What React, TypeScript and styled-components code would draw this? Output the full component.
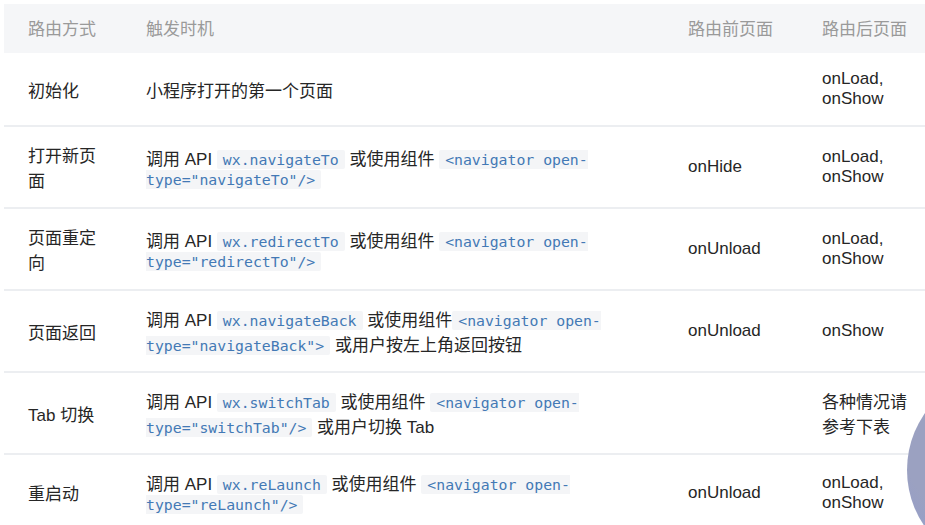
import styled, { createGlobalStyle } from 'styled-components';

const GlobalStyle = createGlobalStyle`
  html, body {
    margin: 0;
    padding: 0;
    background: #ffffff;
    overflow: hidden;
  }
  body {
    font-family: 'Liberation Sans', 'Noto Sans CJK SC', sans-serif;
  }
`;

const Page = styled.div`
  position: relative;
  width: 925px;
  height: 525px;
  padding: 4px 0 0 4px;
  box-sizing: border-box;
  overflow: hidden;
`;

const Table = styled.table`
  width: 928px;
  table-layout: fixed;
  border-collapse: collapse;
  font-size: 17px;
  color: #262626;
`;

const HeadCell = styled.th`
  background: #f5f6f8;
  color: #9a9a9a;
  font-weight: normal;
  text-align: left;
  padding: 11px 24px 13px;
  line-height: normal;
`;

const Row = styled.tr<{ $first?: boolean }>`
  border-bottom: 2px solid #eceef1;
  td {
    padding-top: ${(p) => (p.$first ? '16px' : '15px')};
    padding-bottom: ${(p) => (p.$first ? '16px' : '15px')};
  }
`;

const Cell = styled.td`
  padding: 15px 24px;
  vertical-align: middle;
  line-height: normal;
`;

const Code = styled.code`
  font-family: 'DejaVu Sans Mono', monospace;
  font-size: 14.8px;
  color: #4379b5;
  background: #f4f5f7;
  padding: 1px 6px;
  border-radius: 2px;
`;

// floating button peeking in from the right edge
const FloatBall = styled.div`
  position: absolute;
  left: 907px;
  top: 371px;
  width: 198px;
  height: 198px;
  border-radius: 50%;
  background: radial-gradient(circle at 50% 30%, #9ba1c1 62%, #909bd2 100%);
`;

type RouteRow = {
  way: string;
  trigger: React.ReactNode;
  before: string;
  after: React.ReactNode;
};

const both = (
  <>
    onLoad,
    <br />
    onShow
  </>
);

const rows: RouteRow[] = [
  {
    way: '初始化',
    trigger: '小程序打开的第一个页面',
    before: '',
    after: both,
  },
  {
    way: '打开新页面',
    trigger: (
      <>
        调用 API <Code>wx.navigateTo</Code> 或使用组件{' '}
        <Code>{'<navigator open-type="navigateTo"/>'}</Code>
      </>
    ),
    before: 'onHide',
    after: both,
  },
  {
    way: '页面重定向',
    trigger: (
      <>
        调用 API <Code>wx.redirectTo</Code> 或使用组件{' '}
        <Code>{'<navigator open-type="redirectTo"/>'}</Code>
      </>
    ),
    before: 'onUnload',
    after: both,
  },
  {
    way: '页面返回',
    trigger: (
      <>
        调用 API <Code>wx.navigateBack</Code> 或使用组件
        <Code>{'<navigator open-type="navigateBack">'}</Code> 或用户按左上角返回按钮
      </>
    ),
    before: 'onUnload',
    after: 'onShow',
  },
  {
    way: 'Tab 切换',
    trigger: (
      <>
        调用 API <Code>wx.switchTab</Code> 或使用组件{' '}
        <Code>{'<navigator open-type="switchTab"/>'}</Code> 或用户切换 Tab
      </>
    ),
    before: '',
    after: '各种情况请参考下表',
  },
  {
    way: '重启动',
    trigger: (
      <>
        调用 API <Code>wx.reLaunch</Code> 或使用组件{' '}
        <Code>{'<navigator open-type="reLaunch"/>'}</Code>
      </>
    ),
    before: 'onUnload',
    after: both,
  },
];

const App = () => {
  return (
    <Page>
      <GlobalStyle />
      <Table>
        <colgroup>
          <col style={{ width: 118 }} />
          <col style={{ width: 542 }} />
          <col style={{ width: 134 }} />
          <col style={{ width: 134 }} />
        </colgroup>
        <thead>
          <tr>
            <HeadCell>路由方式</HeadCell>
            <HeadCell>触发时机</HeadCell>
            <HeadCell>路由前页面</HeadCell>
            <HeadCell>路由后页面</HeadCell>
          </tr>
        </thead>
        <tbody>
          {rows.map((row, index) => (
            <Row key={index} $first={index === 0}>
              <Cell>{row.way}</Cell>
              <Cell>{row.trigger}</Cell>
              <Cell>{row.before}</Cell>
              <Cell>{row.after}</Cell>
            </Row>
          ))}
        </tbody>
      </Table>
      <FloatBall />
    </Page>
  );
};

export default App;
